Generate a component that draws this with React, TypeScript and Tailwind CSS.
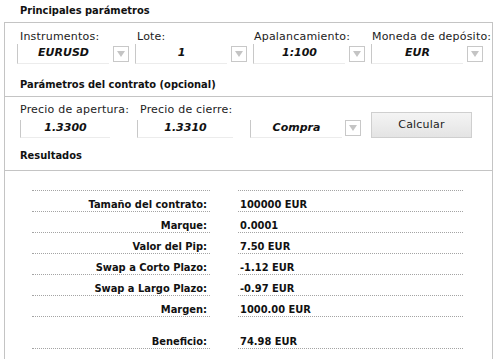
import React from "react";

const Arrow = () => (
  <div className="w-[16px] h-[16px] border border-[#c8c8c8] bg-white flex items-center justify-center">
    <svg width="8" height="6" viewBox="0 0 8 6">
      <path d="M0 0 L8 0 L4 6 Z" fill="#c4c4c4" />
    </svg>
  </div>
);

const valueCls =
  "border-l border-b border-l-[#c8c8c8] border-b-[#ececec] flex items-center justify-center font-bold italic text-[#111] font-['DejaVu_Sans',sans-serif] text-[11px]";

const Select = ({ value }: { value: string }) => (
  <div className="flex items-center w-[118px] shrink-0">
    <div className={`w-[92px] h-[20px] ${valueCls}`}>{value}</div>
    <div className="ml-[4px]">
      <Arrow />
    </div>
  </div>
);

const rows: [string, string][] = [
  ["Tamaño del contrato:", "100000 EUR"],
  ["Marque:", "0.0001"],
  ["Valor del Pip:", "7.50 EUR"],
  ["Swap a Corto Plazo:", "-1.12 EUR"],
  ["Swap a Largo Plazo:", "-0.97 EUR"],
  ["Margen:", "1000.00 EUR"],
];

const Row = ({ label, value, h }: { label: string; value: string; h: string }) => (
  <div className={`flex ${h}`}>
    <div className="w-[178px] border-b border-dotted border-[#a4a4a4] flex items-end justify-end pr-[3px] leading-[13px] pb-[0px]">
      {label}
    </div>
    <div className="w-[28px]" />
    <div className="w-[225px] border-b border-dotted border-[#a4a4a4] flex items-end pl-[2px] leading-[13px]">
      {value}
    </div>
  </div>
);

export default function App() {
  const bold = "font-bold font-['DejaVu_Sans_Condensed','DejaVu_Sans',sans-serif] text-[11px] text-[#111]";
  const label = "font-['DejaVu_Sans',sans-serif] text-[11px] text-[#222] tracking-[0.2px]";
  return (
    <div className="w-[497px] h-[359px] bg-white overflow-hidden font-['DejaVu_Sans',sans-serif]">
      <div className={`h-[22px] pl-[20px] flex items-center ${bold}`}>Principales parámetros</div>
      <div className="ml-[4px] w-[489px] h-[337px] border-t border-x border-[#c4c4c4]">
        <div className={`flex pl-[15px] pt-[6px] h-[20px] ${label}`}>
          <div className="w-[117px]">Instrumentos:</div>
          <div className="w-[117px]">Lote:</div>
          <div className="w-[118px]">Apalancamiento:</div>
          <div>Moneda de depósito:</div>
        </div>
        <div className="flex pl-[12px] pt-[1px]">
          <Select value="EURUSD" />
          <Select value="1" />
          <Select value="1:100" />
          <Select value="EUR" />
        </div>
        <div className={`h-[33px] pl-[15px] flex items-end pb-[3px] border-b border-[#c4c4c4] ${bold}`}>
          Parámetros del contrato (opcional)
        </div>
        <div className={`flex pl-[15px] pt-[5px] h-[21px] ${label}`}>
          <div className="w-[120px]">Precio de apertura:</div>
          <div>Precio de cierre:</div>
        </div>
        <div className="flex items-center pl-[15px]">
          <div className={`w-[90px] h-[18px] mt-[1px] ${valueCls}`}>1.3300</div>
          <div className="w-[27px]" />
          <div className={`w-[96px] h-[18px] mt-[1px] ${valueCls}`}>1.3310</div>
          <div className="w-[17px]" />
          <div className="flex items-center">
            <div className={`w-[92px] h-[18px] mt-[1px] ${valueCls}`}>Compra</div>
            <div className="ml-[3px]">
              <Arrow />
            </div>
          </div>
          <button className="ml-[10px] w-[101px] h-[26px] border border-[#cfcfcf] bg-gradient-to-b from-[#f4f4f4] to-[#e4e4e4] text-[11px] text-[#222] font-['DejaVu_Sans',sans-serif] tracking-[0.2px] -mt-[6px]">
            Calcular
          </button>
        </div>
        <div className={`h-[33px] pl-[15px] flex items-end pb-[6px] border-b border-[#c4c4c4] ${bold}`}>
          Resultados
        </div>
        <div className={`pl-[27px] ${bold}`}>
          <Row label="" value="" h="h-[20px]" />
          {rows.map(([l, v]) => (
            <Row key={l} label={l} value={v} h="h-[21px]" />
          ))}
          <Row label="Beneficio:" value="74.98 EUR" h="h-[32px]" />
        </div>
      </div>
    </div>
  );
}
